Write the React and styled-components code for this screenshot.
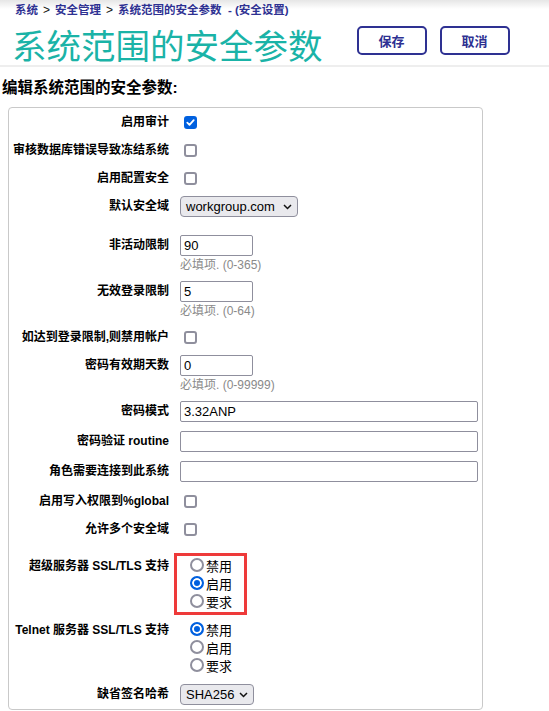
import React from "react";
import styled, { createGlobalStyle } from "styled-components";

const GlobalStyle = createGlobalStyle`
  html, body {
    margin: 0;
    padding: 0;
    background: #fff;
    overflow: hidden;
  }
  body {
    font-family: "Liberation Sans", "Noto Sans CJK SC", sans-serif;
    color: #000;
  }
`;

const Header = styled.header`
  height: 67px;
  box-sizing: border-box;
  padding: 2px 0 0 15px;
  border-bottom: 2px solid #eeeeee;
  background: linear-gradient(to bottom, #e6e6e6 0, #ffffff 9px);
`;

const Crumbs = styled.div`
  font-size: 11.5px;
  font-weight: bold;
  line-height: 16px;
  color: #2e3192;
`;

const CrumbLink = styled.a`
  color: inherit;
  text-decoration: none;
`;

const Sep = styled.span`
  color: #111;
  font-weight: normal;
  font-size: 12px;
  margin: 0 5px;
`;

const TitleRow = styled.div`
  display: flex;
  align-items: flex-start;
  margin-top: 6px;
`;

const Title = styled.h1`
  margin: 0 0 0 -3px;
  font-family: "Noto Sans CJK SC", sans-serif;
  font-size: 34.5px;
  font-weight: 400;
  line-height: 40px;
  color: #1ab3a7;
`;

const Actions = styled.div`
  display: flex;
  gap: 13px;
  margin: 2px 0 0 34px;
`;

const ActionButton = styled.button`
  width: 70px;
  height: 29px;
  box-sizing: border-box;
  border: 2px solid #2e3192;
  border-radius: 5px;
  background: #fff;
  color: #2e3192;
  font-family: "Liberation Sans", "Noto Sans CJK SC", sans-serif;
  font-size: 13px;
  font-weight: bold;
  padding: 0;
  cursor: pointer;
`;

const Heading = styled.h2`
  margin: 11px 0 9px 2px;
  font-size: 15.5px;
  font-weight: bold;
  line-height: 20px;
`;

const FormBox = styled.div`
  margin-left: 8px;
  width: 475px;
  box-sizing: border-box;
  border: 1px solid #c9c9c9;
  border-radius: 4px;
`;

const Row = styled.div`
  display: grid;
  grid-template-columns: 160px 1fr;
  column-gap: 11px;
  padding: 4px 0;
  margin-top: ${(p) => p.$space || 0}px;
`;

const Label = styled.div`
  text-align: right;
  font-size: 12px;
  font-weight: bold;
  line-height: 20px;
  white-space: nowrap;
`;

const Field = styled.div`
  display: flex;
  flex-direction: column;
  align-items: flex-start;
  min-height: 20px;
`;

const Box = styled.span`
  display: inline-flex;
  align-items: center;
  justify-content: center;
  width: 13px;
  height: 13px;
  box-sizing: border-box;
  margin: 3.5px 0 0 4px;
  border: 2px solid ${(p) => (p.$checked ? "#0060df" : "#8f8f9d")};
  border-radius: 3px;
  background: ${(p) => (p.$checked ? "#0060df" : "#fff")};
`;

function Checkbox({ checked }) {
  return (
    <Box $checked={checked}>
      {checked && (
        <svg width="9" height="9" viewBox="0 0 9 9">
          <path
            d="M1.3 4.7 L3.5 6.9 L7.7 2.1"
            fill="none"
            stroke="#fff"
            strokeWidth="1.8"
            strokeLinecap="round"
            strokeLinejoin="round"
          />
        </svg>
      )}
    </Box>
  );
}

const SelectBox = styled.div`
  display: inline-flex;
  align-items: center;
  justify-content: space-between;
  width: ${(p) => p.$w}px;
  height: 21px;
  box-sizing: border-box;
  padding: 0 5px;
  border: 1px solid #8f8f9d;
  border-radius: 4px;
  background: #e9e9ed;
  font-size: 13px;
  color: #000;
`;

function Select({ value, width }) {
  return (
    <SelectBox $w={width}>
      <span>{value}</span>
      <svg width="9" height="6" viewBox="0 0 9 6">
        <path d="M1 1 L4.5 4.5 L8 1" fill="none" stroke="#111" strokeWidth="1.5" />
      </svg>
    </SelectBox>
  );
}

const Input = styled.input`
  width: ${(p) => p.$w}px;
  height: 21px;
  box-sizing: border-box;
  margin: 0 0 1px;
  padding: 0 3px;
  border: 1px solid #8f8f9d;
  border-radius: 2px;
  font-family: "Liberation Sans", sans-serif;
  font-size: 13px;
  color: #000;
  background: #fff;
  outline: none;
`;

const Hint = styled.div`
  font-size: 12px;
  line-height: 16px;
  color: #8a8a8a;
`;

const RadioGroup = styled.div`
  position: relative;
  display: flex;
  flex-direction: column;

  ${(p) =>
    p.$highlight &&
    `
    &::after {
      content: "";
      position: absolute;
      left: -6px;
      top: -3px;
      width: 73px;
      height: 62px;
      box-sizing: border-box;
      border: 3px solid #ee3a3a;
      pointer-events: none;
    }
  `}
`;

const RadioItem = styled.label`
  display: flex;
  align-items: center;
  height: 18px;
  padding-left: 10px;
  font-size: 13px;
`;

const RadioDot = styled.span`
  width: 14px;
  height: 14px;
  box-sizing: border-box;
  margin-right: 2px;
  border-radius: 50%;
  border: 2px solid ${(p) => (p.$checked ? "#0060df" : "#8f8f9d")};
  background: ${(p) => (p.$checked ? "#0060df" : "#fff")};
  box-shadow: ${(p) => (p.$checked ? "inset 0 0 0 2px #fff" : "none")};
`;

function Radios({ options, selected, highlight }) {
  return (
    <RadioGroup $highlight={highlight}>
      {options.map((opt) => (
        <RadioItem key={opt}>
          <RadioDot $checked={opt === selected} />
          {opt}
        </RadioItem>
      ))}
    </RadioGroup>
  );
}

const sslOptions = ["禁用", "启用", "要求"];

export default function App() {
  return (
    <>
      <GlobalStyle />
      <Header>
        <Crumbs>
          <CrumbLink href="#">系统</CrumbLink>
          <Sep>&gt;</Sep>
          <CrumbLink href="#">安全管理</CrumbLink>
          <Sep>&gt;</Sep>
          <CrumbLink href="#">系统范围的安全参数</CrumbLink>
          &nbsp;&nbsp;- (安全设置)
        </Crumbs>
        <TitleRow>
          <Title>系统范围的安全参数</Title>
          <Actions>
            <ActionButton>保存</ActionButton>
            <ActionButton>取消</ActionButton>
          </Actions>
        </TitleRow>
      </Header>

      <Heading>编辑系统范围的安全参数:</Heading>

      <FormBox>
        <Row>
          <Label>启用审计</Label>
          <Field>
            <Checkbox checked />
          </Field>
        </Row>
        <Row>
          <Label>审核数据库错误导致冻结系统</Label>
          <Field>
            <Checkbox />
          </Field>
        </Row>
        <Row>
          <Label>启用配置安全</Label>
          <Field>
            <Checkbox />
          </Field>
        </Row>
        <Row>
          <Label>默认安全域</Label>
          <Field>
            <Select value="workgroup.com" width={118} />
          </Field>
        </Row>
        <Row $space={10}>
          <Label>非活动限制</Label>
          <Field>
            <Input $w={73} defaultValue="90" />
            <Hint>必填项. (0-365)</Hint>
          </Field>
        </Row>
        <Row>
          <Label>无效登录限制</Label>
          <Field>
            <Input $w={73} defaultValue="5" />
            <Hint>必填项. (0-64)</Hint>
          </Field>
        </Row>
        <Row>
          <Label>如达到登录限制,则禁用帐户</Label>
          <Field>
            <Checkbox />
          </Field>
        </Row>
        <Row>
          <Label>密码有效期天数</Label>
          <Field>
            <Input $w={73} defaultValue="0" />
            <Hint>必填项. (0-99999)</Hint>
          </Field>
        </Row>
        <Row>
          <Label>密码模式</Label>
          <Field>
            <Input $w={298} defaultValue="3.32ANP" />
          </Field>
        </Row>
        <Row>
          <Label>密码验证 routine</Label>
          <Field>
            <Input $w={298} defaultValue="" />
          </Field>
        </Row>
        <Row>
          <Label>角色需要连接到此系统</Label>
          <Field>
            <Input $w={298} defaultValue="" />
          </Field>
        </Row>
        <Row>
          <Label>启用写入权限到%global</Label>
          <Field>
            <Checkbox />
          </Field>
        </Row>
        <Row>
          <Label>允许多个安全域</Label>
          <Field>
            <Checkbox />
          </Field>
        </Row>
        <Row $space={9}>
          <Label>超级服务器 SSL/TLS 支持</Label>
          <Field>
            <Radios options={sslOptions} selected="启用" highlight />
          </Field>
        </Row>
        <Row $space={2}>
          <Label>Telnet 服务器 SSL/TLS 支持</Label>
          <Field>
            <Radios options={sslOptions} selected="禁用" />
          </Field>
        </Row>
        <Row $space={2}>
          <Label>缺省签名哈希</Label>
          <Field>
            <Select value="SHA256" width={74} />
          </Field>
        </Row>
      </FormBox>
    </>
  );
}
